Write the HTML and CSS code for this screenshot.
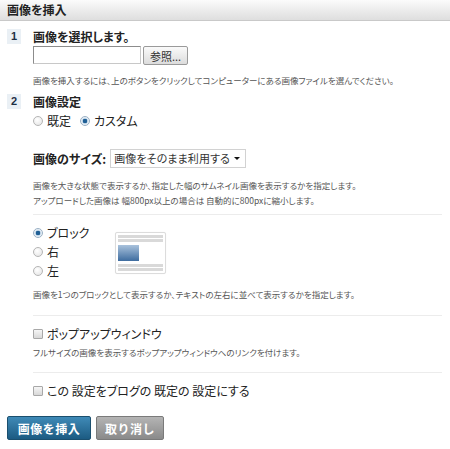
FILE: index.html
```html
<!DOCTYPE html>
<html lang="ja">
<head>
<meta charset="utf-8">
<title>画像を挿入</title>
<link rel="stylesheet" href="styles.css">
</head>
<body>
<div class="header">画像を挿入</div>
<div class="content">
  <div class="step step-first">
    <span class="num">1</span>
    <div class="step-body">
      <div class="step-title">画像を選択します。</div>
      <div class="file-row">
        <span class="file-input"></span>
        <button class="browse" type="button">参照...</button>
      </div>
      <p class="hint hint-file">画像を挿入するには、上のボタンをクリックしてコンピューターにある画像ファイルを選んでください。</p>
    </div>
  </div>

  <div class="step step-second">
    <span class="num">2</span>
    <div class="step-body">
      <div class="step-title">画像設定</div>
      <div class="radio-row">
        <label class="opt"><input type="radio" name="mode"> 既定</label>
        <label class="opt"><input type="radio" name="mode" checked> カスタム</label>
      </div>

      <div class="size-row">
        <span class="size-label">画像のサイズ:</span>
        <span class="select"><span class="select-text">画像をそのまま利用する</span><span class="arrow"></span></span>
      </div>
      <p class="hint hint-size">画像を大きな状態で表示するか、指定した幅のサムネイル画像を表示するかを指定します。<br>アップロードした画像は 幅800px以上の場合は 自動的に800pxに縮小します。</p>

      <div class="section layout-section">
        <div class="layout-row">
          <div class="radio-col">
            <label class="opt"><input type="radio" name="pos" checked> ブロック</label>
            <label class="opt"><input type="radio" name="pos"> 右</label>
            <label class="opt"><input type="radio" name="pos"> 左</label>
          </div>
          <div class="thumb">
            <span class="stripe"></span>
            <span class="stripe"></span>
            <span class="block"></span>
            <span class="stripe"></span>
            <span class="stripe"></span>
          </div>
        </div>
        <p class="hint hint-layout">画像を1つのブロックとして表示するか、テキストの左右に並べて表示するかを指定します。</p>
      </div>

      <div class="section popup-section">
        <label class="opt"><input type="checkbox"> ポップアップウィンドウ</label>
        <p class="hint hint-popup">フルサイズの画像を表示するポップアップウィンドウへのリンクを付けます。</p>
      </div>

      <div class="section default-section">
        <label class="opt"><input type="checkbox"> この 設定をブログの 既定の 設定にする</label>
      </div>
    </div>
  </div>

  <div class="actions">
    <button class="btn btn-primary" type="button">画像を挿入</button>
    <button class="btn btn-cancel" type="button">取り消し</button>
  </div>
</div>
</body>
</html>
```

FILE: styles.css
```css
* { box-sizing: border-box; }

body {
  margin: 0;
  font-family: "Noto Sans CJK JP", "Liberation Sans", sans-serif;
  font-feature-settings: "palt";
  color: #222;
  background: #fff;
  font-size: 12px;
}

.header {
  height: 21px;
  line-height: 20px;
  padding-left: 7px;
  font-weight: bold;
  font-size: 12px;
  color: #222;
  background: linear-gradient(#fbfbfb, #dedede);
  border-bottom: 1px solid #c9c9c9;
}

.content {
  padding: 0 8px 0 7px;
}

.step {
  display: grid;
  grid-template-columns: 26px 1fr;
}

.step-first { margin-top: 8px; }
.step-second { margin-top: 6px; }

.num {
  width: 14px;
  height: 15px;
  background: #eaf0f5;
  color: #1e2f44;
  font-weight: bold;
  font-size: 11px;
  line-height: 15px;
  text-align: center;
  font-family: "Liberation Sans", sans-serif;
}

.step-title {
  font-weight: bold;
  font-size: 12px;
  line-height: 16px;
}

.file-row {
  display: flex;
  align-items: flex-start;
  gap: 2px;
  margin-top: 1px;
}

.file-input {
  width: 108px;
  height: 18px;
  border: 1px solid #8c8c8c;
  border-right-color: #c8c8c8;
  border-bottom-color: #c8c8c8;
  background: #fff;
}

.browse {
  width: 45px;
  height: 19px;
  padding: 0;
  font-family: inherit;
  font-size: 11px;
  color: #333;
  border: 1px solid #9a9a9a;
  border-radius: 2px;
  background: linear-gradient(#fafafa, #dcdcdc);
}

.hint {
  margin: 0;
  font-size: 8.5px;
  color: #555;
  line-height: 15px;
  white-space: nowrap;
}

.hint-file { margin-top: 8px; }

.radio-row {
  display: flex;
  gap: 9px;
  margin-top: 3px;
  line-height: 16px;
}

.opt {
  display: flex;
  align-items: center;
  gap: 4px;
  font-size: 12px;
  line-height: 16px;
  color: #222;
}

input[type="radio"],
input[type="checkbox"] {
  -webkit-appearance: none;
  appearance: none;
  margin: 0;
  width: 10px;
  height: 10px;
  flex: none;
  border: 1px solid #b5b5b5;
  background: radial-gradient(circle at 40% 35%, #fff, #e2e2e2);
}

input[type="radio"] {
  border-radius: 50%;
}

input[type="radio"]:checked {
  background: radial-gradient(circle, #1f5f95 0 2px, #c9dcec 2.6px, #f2f6fa 4px);
  border-color: #9ab0c4;
}

input[type="checkbox"] {
  border-radius: 1px;
  border-color: #a8a8a8;
  background: linear-gradient(#f6f6f6, #d8d8d8);
}

.size-row {
  display: flex;
  align-items: center;
  gap: 4px;
  margin-top: 19px;
  height: 20px;
}

.size-label {
  font-weight: bold;
  font-size: 12px;
  white-space: nowrap;
}

.select {
  flex: none;
  display: flex;
  align-items: center;
  width: 136px;
  height: 19px;
  padding-left: 3px;
  border: 1px solid #d2d2d2;
  font-size: 11px;
  color: #333;
  background: #fff;
  white-space: nowrap;
}

.select-text {
  letter-spacing: 0.1px;
}

.arrow {
  margin-left: auto;
  margin-right: 5px;
  width: 0;
  height: 0;
  border-left: 3px solid transparent;
  border-right: 3px solid transparent;
  border-top: 3px solid #111;
}

.hint-size { margin-top: 10px; }

.section {
  border-top: 1px solid #ececec;
}

.layout-section {
  margin-top: 6px;
  padding-top: 10px;
}

.layout-row {
  display: flex;
  align-items: flex-start;
}

.radio-col {
  display: flex;
  flex-direction: column;
  gap: 3px;
  width: 82px;
}

.thumb {
  margin-top: 7px;
  width: 51px;
  height: 42px;
  border: 1px solid #dcdcdc;
  border-radius: 2px;
  box-shadow: 0 0 1px rgba(0,0,0,0.08);
  background: #fff;
  padding: 2px 2px;
  display: flex;
  flex-direction: column;
  gap: 1px;
}

.stripe {
  display: block;
  height: 3px;
  background: #d9d9d9;
}

.block {
  display: block;
  width: 21px;
  height: 16px;
  margin: 2px 0;
  background: linear-gradient(#a9c2dc, #3e6c9f);
}

.hint-layout { margin-top: 8px; }

.popup-section {
  margin-top: 13px;
  padding-top: 10px;
}

.hint-popup { margin-top: 3px; }

.default-section {
  margin-top: 12px;
  padding-top: 10px;
}

.actions {
  display: flex;
  gap: 5px;
  margin-top: 17px;
}

.btn {
  height: 24px;
  padding: 0;
  font-family: inherit;
  font-size: 12px;
  font-weight: bold;
  color: #fff;
  border-radius: 2px;
  letter-spacing: 0.5px;
}

.btn-primary {
  width: 84px;
  border: 1px solid #1b4f6e;
  background: linear-gradient(#3f8ab7, #1c5b82);
}

.btn-cancel {
  width: 68px;
  border: 1px solid #7a7a7a;
  background: linear-gradient(#b4b4b4, #8a8a8a);
}
```
